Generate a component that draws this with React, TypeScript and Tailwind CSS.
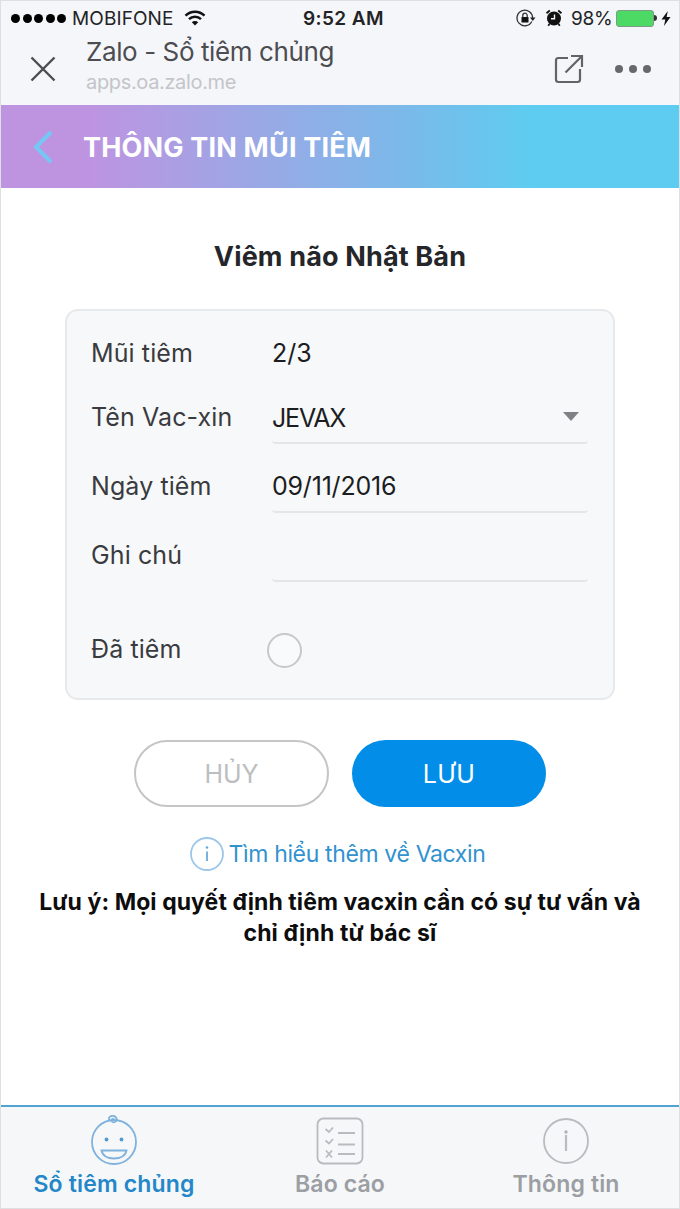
import React, { useState } from 'react';

interface FieldRowProps {
  label: string;
  className?: string;
  underline?: boolean;
  children?: React.ReactNode;
}

const FieldRow: React.FC<FieldRowProps> = ({ label, className = '', underline, children }) => (
  <div className={`flex h-[52px] ${className}`}>
    <div className="flex w-[181px] shrink-0 items-center whitespace-nowrap tracking-[0.1px] text-[#3a3b3e]">
      {label}
    </div>
    <div
      className={`flex flex-1 items-center justify-between whitespace-nowrap text-[#1c1d1f] ${
        underline ? 'rounded-[4px] border-b-2 border-[#e3e5e7] pt-[2px]' : ''
      }`}
    >
      {children}
    </div>
  </div>
);

const StatusBar = () => (
  <div className="flex h-[34px] items-center pl-[10px] text-[19px] leading-none text-[#222325]">
    <div className="flex w-[61px] gap-[2.5px]">
      {[0, 1, 2, 3, 4].map((dot) => (
        <span key={dot} className="size-[9px] rounded-full bg-black" />
      ))}
    </div>
    <span className="w-[104px] whitespace-nowrap tracking-[0.1px]">MOBIFONE</span>
    <svg width="22" height="16" viewBox="0 0 22 16" className="ml-[8px]" fill="none" stroke="#111" strokeWidth="2.5">
      <path d="M1.5 5.6a13.5 13.5 0 0 1 19 0" />
      <path d="M5 9.2a8.6 8.6 0 0 1 12 0" />
      <path d="M11 15.5 7.8 12.2a4.6 4.6 0 0 1 6.4 0Z" fill="#111" stroke="none" />
    </svg>
    <span className="ml-[97px] w-[82px] whitespace-nowrap font-semibold tracking-[0.4px]">9:52 AM</span>
    <svg width="20" height="18" viewBox="0 0 20 18" className="ml-[131px]" fill="none" stroke="#333" strokeWidth="1.3">
      <path d="M15.8 12.5a7.8 7.8 0 1 1 .8-3" />
      <path d="M14 8.5h5.5l-2.7 3.4z" fill="#222" stroke="none" />
      <rect x="5.5" y="8" width="7" height="5.5" fill="#111" stroke="none" />
      <path d="M6.8 8.5V6.4a2.2 2.2 0 0 1 4.4 0v2.1" />
    </svg>
    <svg width="18" height="18" viewBox="0 0 18 18" className="ml-[9px]" fill="#111">
      <circle cx="9" cy="9.5" r="7" />
      <path d="M1.5 4.2 4.8 1.5M16.5 4.2l-3.3-2.7M4.5 15l-1.3 1.7M13.5 15l1.3 1.7" stroke="#111" strokeWidth="1.8" />
      <path d="M9.5 5.5v4.3H6" fill="none" stroke="#f5f6f8" strokeWidth="1.4" />
    </svg>
    <span className="ml-[8px] w-[43px] whitespace-nowrap tracking-[-0.3px]">98%</span>
    <div className="ml-[2px] h-[17px] w-[38px] rounded-[3px] border border-[#7f9a86] bg-[#4cd964]" />
    <div className="h-[6px] w-[3px] rounded-r-full bg-[#333]" />
    <svg width="10" height="15" viewBox="0 0 10 15" className="ml-[4px]" fill="#111">
      <path d="M6.8 0 .5 8.5h3.8L3 15l6.5-9H5.6z" />
    </svg>
  </div>
);

const BrowserBar = () => (
  <div className="flex h-[70px] pl-[29px]">
    <svg width="26" height="26" viewBox="0 0 26 26" className="mt-[21px]" fill="none" stroke="#4c4d50" strokeWidth="2.4">
      <path d="M1.5 1.5l23 23M24.5 1.5l-23 23" />
    </svg>
    <div className="ml-[30px] w-[460px] whitespace-nowrap">
      <div className="text-[26px] leading-[34px] tracking-[-0.4px] text-[#4c4d50]">Zalo - Sổ tiêm chủng</div>
      <div className="text-[20px] leading-[26px] tracking-[-0.35px] text-[#c3c5c9]">apps.oa.zalo.me</div>
    </div>
    <svg width="30" height="30" viewBox="0 0 30 30" className="ml-[8px] mt-[19px]" fill="none" stroke="#626367" strokeWidth="2.2">
      <path d="M14 4H4.5Q2 4 2 6.5v19Q2 28 4.5 28h19Q26 28 26 25.5V15" />
      <path d="M11.5 18.5 28 2M17 2h11v11" />
    </svg>
    <div className="ml-[31px] mt-[30px] flex gap-[6.5px]">
      {[0, 1, 2].map((dot) => (
        <span key={dot} className="size-[7.5px] rounded-full bg-[#67686c]" />
      ))}
    </div>
  </div>
);

const BabyIcon = () => (
  <svg width="48" height="50" viewBox="0 0 48 50" fill="none" stroke="#7fb2dc" strokeWidth="1.8">
    <circle cx="24" cy="27" r="22" />
    <path d="M19.5 6C17 1 23.5-1 26.3 2.8c1.5 3-1.5 5.2-3.8 4.2-2.5-1.5 0-4.5 1.6-2.6" />
    <circle cx="16.5" cy="24.5" r="1.9" fill="#5199cf" stroke="none" />
    <circle cx="31.5" cy="24.5" r="1.9" fill="#5199cf" stroke="none" />
    <path d="M11.5 35.5h25c-1 5-6 8-12.5 8s-11.5-3-12.5-8Z" />
  </svg>
);

const ReportIcon = () => (
  <svg width="48" height="50" viewBox="0 0 48 50" fill="none" stroke="#b9bbbf" strokeWidth="1.8">
    <rect x="1.5" y="3.5" width="45" height="45" rx="6" />
    <path d="M22 18h17M22 29.5h17M22 39h17" />
    <path d="m9.5 14 3.5 3 4-4.5M9.5 25.5l3.5 3 4-4.5M10 35.5l6 7M16 35.5l-6 7" />
  </svg>
);

const InfoIcon = () => (
  <svg width="48" height="50" viewBox="0 0 48 50" fill="none" stroke="#b9bbbf" strokeWidth="1.8">
    <circle cx="24" cy="26" r="22" />
    <path d="M24 20v16" strokeWidth="2.2" />
    <circle cx="24" cy="17" r="1.7" fill="#b0b2b6" stroke="none" />
  </svg>
);

const tabs = [
  { label: 'Sổ tiêm chủng', icon: BabyIcon },
  { label: 'Báo cáo', icon: ReportIcon },
  { label: 'Thông tin', icon: InfoIcon },
];

export default function App() {
  const [done, setDone] = useState(false);
  const [activeTab, setActiveTab] = useState(0);

  return (
    <div className="flex h-[1209px] w-[680px] flex-col overflow-hidden border border-[#dedfe0] bg-white font-['Inter','Liberation_Sans',sans-serif]">
      <header className="h-[104px] bg-[#f5f6f9]">
        <StatusBar />
        <BrowserBar />
      </header>

      <div className="flex h-[83px] items-center bg-[linear-gradient(90deg,#be94e1_0%,#be94e1_13%,#7db8e9_58%,#5eccf0_78%,#5eccf0_100%)] pl-[31px]">
        <svg width="22" height="36" viewBox="0 0 22 36" fill="none" stroke="#75c8f5" strokeWidth="4">
          <path d="M19 3 4 18l15 15" />
        </svg>
        <h1 className="ml-[29px] mt-[3px] whitespace-nowrap text-[27px] font-bold tracking-[0.18px] text-white">
          THÔNG TIN MŨI TIÊM
        </h1>
      </div>

      <main className="flex flex-1 flex-col items-center">
        <h2 className="mt-[50px] whitespace-nowrap text-[27px] font-bold leading-[38px] tracking-[0.15px] text-[#25262a]">
          Viêm não Nhật Bản
        </h2>

        <div className="mt-[33px] h-[391px] w-[550px] rounded-[13px] border-2 border-[#e7e9ea] bg-[#f7f8fa] pl-[24px] pr-[25px] pt-[17px] text-[25px]">
          <FieldRow label="Mũi tiêm">2/3</FieldRow>
          <FieldRow label="Tên Vac-xin" className="mt-[12px]" underline>
            <span className="pt-[2px] tracking-[-1.2px]">JEVAX</span>
            <svg width="16" height="9" viewBox="0 0 16 9" className="mb-[3px] mr-[9px]" fill="#808184">
              <path d="M0 0h16L8 9z" />
            </svg>
          </FieldRow>
          <FieldRow label="Ngày tiêm" className="mt-[17px]" underline>
            <span className="tracking-[-0.2px]">09/11/2016</span>
          </FieldRow>
          <FieldRow label="Ghi chú" className="mt-[17px]" underline />
          <FieldRow label="Đã tiêm" className="mt-[42px]">
            <button
              type="button"
              aria-label="Đã tiêm"
              aria-pressed={done}
              onClick={() => setDone((prev) => !prev)}
              className={`-ml-[5px] size-[35px] rounded-full border-2 border-[#c6c8ca] ${done ? 'bg-[#028ee8]' : 'bg-[#f9fafc]'}`}
            />
          </FieldRow>
        </div>

        <div className="mt-[40px] flex gap-[23px] text-[25px]">
          <button type="button" className="h-[67px] w-[195px] rounded-full border-2 border-[#c4c5c7] pt-[2px] text-[#bcbec0]">
            HỦY
          </button>
          <button type="button" className="h-[67px] w-[194px] rounded-full bg-[#028ee8] pt-[2px] tracking-[0.4px] text-white">
            LƯU
          </button>
        </div>

        <a className="mr-[5px] mt-[29px] flex h-[36px] items-center gap-[5px] whitespace-nowrap text-[23px] tracking-[-0.36px] text-[#3292cf]">
          <svg width="34" height="34" viewBox="0 0 34 34" fill="none" stroke="#9cc7eb" strokeWidth="1.8">
            <circle cx="17" cy="17" r="16" />
            <path d="M17 14.5V24" stroke="#6aa9dc" />
            <circle cx="17" cy="10.5" r="1.3" fill="#6aa9dc" stroke="none" />
          </svg>
          Tìm hiểu thêm về Vacxin
        </a>

        <p className="mt-[15px] whitespace-nowrap text-center text-[23px] font-bold leading-[31px] tracking-[0.07px] text-[#0d0d0e]">
          Lưu ý: Mọi quyết định tiêm vacxin cần có sự tư vấn và
          <br />
          <span className="tracking-[0.15px]">chỉ định từ bác sĩ</span>
        </p>
      </main>

      <nav className="flex h-[103px] border-t-2 border-[#4fa4d2] bg-[#f6f7f9]">
        {tabs.map(({ label, icon: Icon }, index) => (
          <button
            key={label}
            type="button"
            onClick={() => setActiveTab(index)}
            className={`flex flex-1 flex-col items-center whitespace-nowrap pt-[8px] text-[23px] font-semibold tracking-[0.15px] ${
              index === activeTab ? 'text-[#2387c8]' : 'text-[#9b9ea2]'
            }`}
          >
            <Icon />
            <span className="leading-[38px]">{label}</span>
          </button>
        ))}
      </nav>
    </div>
  );
}
